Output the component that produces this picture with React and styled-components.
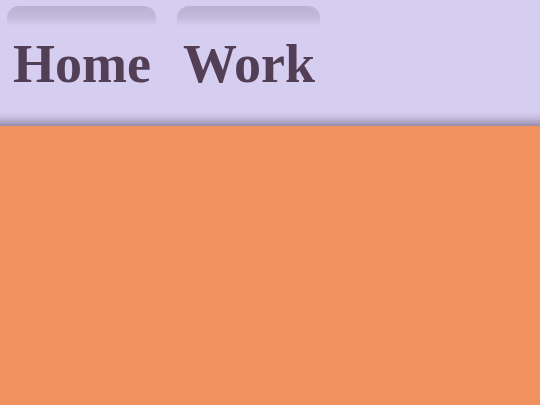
import React from 'react';
import styled, { createGlobalStyle } from 'styled-components';

const GlobalStyle = createGlobalStyle`
  html, body {
    margin: 0;
    padding: 0;
    height: 100%;
  }
  body {
    background: #f0915f;
    font-family: "Liberation Serif", "Times New Roman", serif;
  }
`;

const Header = styled.header`
  display: flex;
  align-items: flex-start;
  gap: 21px;
  height: 126px;
  padding: 6px 0 0 7px;
  box-sizing: border-box;
  background: linear-gradient(
    to bottom,
    #d6cef0 0,
    #d6cef0 112px,
    #c6bedd 118px,
    #aea4c4 122px,
    #968ba9 126px
  );
`;

const Tab = styled.a`
  display: block;
  padding: 31px 5px 0 6px;
  border-radius: 12px 12px 0 0;
  background: linear-gradient(to bottom, #bab2d3 0, #c3bbdc 12px, #d6cef0 20px);
  font-size: 54px;
  line-height: 1;
  font-weight: bold;
  color: #523f55;
  text-decoration: none;
  cursor: pointer;
`;

const Content = styled.main`
  background: #f0915f;
  min-height: 279px;
`;

const tabs = ['Home', 'Work'];

export default function App() {
  return (
    <>
      <GlobalStyle />
      <Header>
        {tabs.map((label) => (
          <Tab key={label}>{label}</Tab>
        ))}
      </Header>
      <Content />
    </>
  );
}
